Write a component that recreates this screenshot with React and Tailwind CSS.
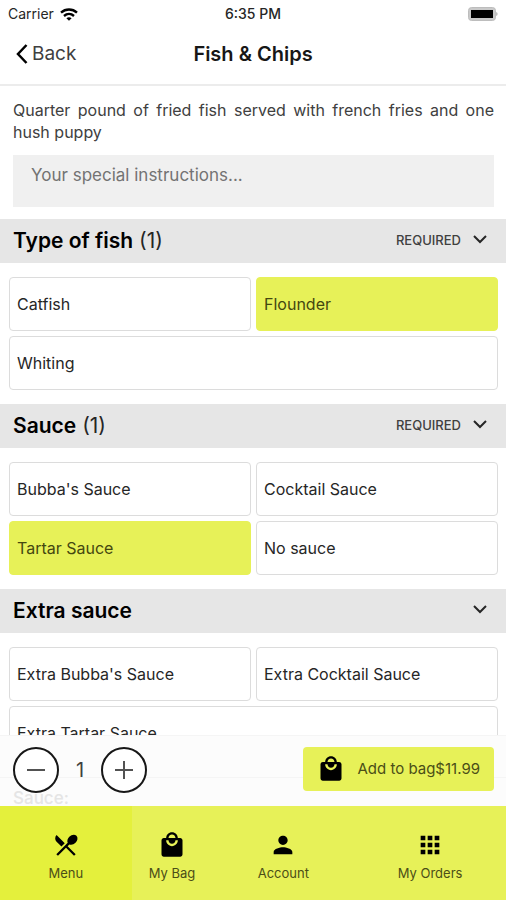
import { useState } from 'react';
import { MdApps, MdLocalMall, MdPerson, MdRestaurantMenu } from 'react-icons/md';

const SECTIONS = [
  { id: 'fish', title: 'Type of fish', count: 1, required: true, options: ['Catfish', 'Flounder', 'Whiting'] },
  {
    id: 'sauce',
    title: 'Sauce',
    count: 1,
    required: true,
    options: ["Bubba's Sauce", 'Cocktail Sauce', 'Tartar Sauce', 'No sauce'],
  },
  {
    id: 'extra',
    title: 'Extra sauce',
    options: ["Extra Bubba's Sauce", 'Extra Cocktail Sauce', 'Extra Tartar Sauce'],
  },
];

const TABS = [
  { label: 'Menu', icon: MdRestaurantMenu, width: 'w-[26%]', active: true },
  { label: 'My Bag', icon: MdLocalMall, width: 'w-[16%]' },
  { label: 'Account', icon: MdPerson, width: 'w-[28%]' },
  { label: 'My Orders', icon: MdApps, width: 'w-[30%]' },
];

function StatusBar() {
  return (
    <div className="grid h-7 shrink-0 grid-cols-3 items-center px-2 text-sm text-neutral-800">
      <div className="flex items-center gap-1.5">
        <span>Carrier</span>
        <svg viewBox="0 0 18 13" className="h-[13px] w-[18px] fill-none stroke-black" strokeWidth="2.4">
          <path d="M1 4.6C5.6.4 12.4.4 17 4.6" />
          <path d="M4 8c3-2.6 7-2.6 10 0" />
          <path d="M6.4 10.2c1.5-1.2 3.7-1.2 5.2 0L9 12.8z" fill="black" stroke="none" />
        </svg>
      </div>
      <span className="text-center font-medium">6:35 PM</span>
      <svg viewBox="0 0 30 14" className="h-3.5 w-[30px] justify-self-end">
        <rect x="0.5" y="0.5" width="27" height="13" rx="3" fill="#c9c9c9" stroke="#bdbdbd" />
        <rect x="3" y="3" width="22" height="8" fill="black" />
        <path d="M28.4 5c1.4.6 1.4 3.4 0 4z" fill="#999" />
      </svg>
    </div>
  );
}

function OptionSection({ section, selected, onSelect }) {
  return (
    <section>
      <div className="flex h-11 items-center justify-between bg-[#e6e6e6] pr-[19px] pl-[13px]">
        <h2 className="text-[21px] font-semibold text-black">
          {section.title}
          {section.count && <span className="font-normal text-neutral-800"> ({section.count})</span>}
        </h2>
        <button aria-label={`Toggle ${section.title}`} className="flex items-center gap-3 text-[13px] font-medium text-neutral-700">
          {section.required && <span>REQUIRED</span>}
          <svg viewBox="0 0 14 9" className="mb-1 h-[9px] w-3.5 fill-none stroke-neutral-800" strokeWidth="2">
            <path d="M1 1l6 6 6-6" />
          </svg>
        </button>
      </div>
      <div className="grid grid-cols-2 gap-[5px] py-3.5 pr-2 pl-[9px]">
        {section.options.map((option, i) => {
          const isLastOdd = i === section.options.length - 1 && i % 2 === 0;
          return (
            <button
              key={option}
              aria-pressed={selected === option}
              onClick={() => onSelect(option)}
              className={`h-[54px] rounded border px-[7px] text-left text-base ${isLastOdd ? 'col-span-2' : ''} ${
                selected === option ? 'border-[#e7f158] bg-[#e7f158] text-[#444710]' : 'border-[#dcdcdc] bg-white text-neutral-800'
              }`}
            >
              {option}
            </button>
          );
        })}
      </div>
    </section>
  );
}

export default function App() {
  const [selected, setSelected] = useState({ fish: 'Flounder', sauce: 'Tartar Sauce' });
  const [quantity, setQuantity] = useState(1);

  return (
    <div className="flex h-screen flex-col overflow-hidden bg-white font-['Inter',sans-serif]">
      <StatusBar />

      {/* Header */}
      <header className="grid h-[58px] shrink-0 grid-cols-[1fr_auto_1fr] items-center border-b-2 border-[#ececec] px-4 pb-1">
        <button className="flex items-center gap-1 text-[19px] text-neutral-700">
          <svg viewBox="0 0 12 20" className="h-5 w-3 fill-none stroke-black" strokeWidth="2.5">
            <path d="M10.5 1L2 10l8.5 9" />
          </svg>
          Back
        </button>
        <h1 className="text-xl font-semibold text-neutral-900">Fish &amp; Chips</h1>
      </header>

      <main className="min-h-0 flex-1 overflow-hidden">
        <div className="px-3 pt-[13px] pb-3 pl-[13px]">
          <p className="text-justify text-base leading-[22px] text-neutral-700">
            Quarter pound of fried fish served with french fries and one hush puppy
          </p>
          <textarea
            aria-label="Special instructions"
            placeholder="Your special instructions..."
            className="mt-3 block h-[52px] w-full resize-none bg-[#f0f0f0] px-[18px] py-2 text-[17px] leading-6 placeholder:text-neutral-500"
          />
        </div>
        {SECTIONS.map((section) => (
          <OptionSection
            key={section.id}
            section={section}
            selected={selected[section.id]}
            onSelect={(option) => setSelected((prev) => ({ ...prev, [section.id]: option }))}
          />
        ))}
      </main>

      {/* Quantity bar, with the order summary fading through behind it */}
      <div className="relative h-[71px] shrink-0 border-t border-neutral-100 bg-[#fcfcfc]">
        <div className="absolute inset-x-0 top-[41px] border-t border-neutral-100 px-[13px] pt-2.5 text-[17px] leading-5 font-medium text-neutral-200">
          Sauce:
        </div>
        <div className="relative flex items-center justify-between pt-[11px] pr-3 pl-[13px]">
          <div className="flex items-center">
            <button
              aria-label="Decrease quantity"
              onClick={() => setQuantity((q) => Math.max(1, q - 1))}
              className="flex size-[46px] items-center justify-center rounded-full border-2 border-neutral-900 bg-white"
            >
              <svg viewBox="0 0 18 18" className="size-[18px] stroke-neutral-600" strokeWidth="2">
                <path d="M0 9h18" />
              </svg>
            </button>
            <span className="w-[42px] text-center text-xl text-neutral-700">{quantity}</span>
            <button
              aria-label="Increase quantity"
              onClick={() => setQuantity((q) => q + 1)}
              className="flex size-[46px] items-center justify-center rounded-full border-2 border-neutral-900 bg-white"
            >
              <svg viewBox="0 0 18 18" className="size-[18px] stroke-neutral-600" strokeWidth="2">
                <path d="M0 9h18M9 0v18" />
              </svg>
            </button>
          </div>
          <button className="mb-0.5 flex h-11 items-center gap-3 rounded bg-[#e7f158] px-3.5 text-[15px] text-[#4b4e17]">
            <MdLocalMall className="size-7 text-black" />
            <span>Add to bag$11.99</span>
          </button>
        </div>
      </div>

      {/* Tabs */}
      <nav className="relative flex h-[94px] shrink-0 bg-[#e7f158]">
        {TABS.map(({ label, icon: Icon, width, active }) => (
          <a
            key={label}
            href="#"
            className={`${width} flex flex-col items-center gap-1 pt-[25px] text-[13px] leading-5 text-[#4b4e17] ${active ? 'bg-[#e4f03c]' : ''}`}
          >
            <Icon className="size-7 text-black" />
            {label}
          </a>
        ))}
      </nav>
    </div>
  );
}
